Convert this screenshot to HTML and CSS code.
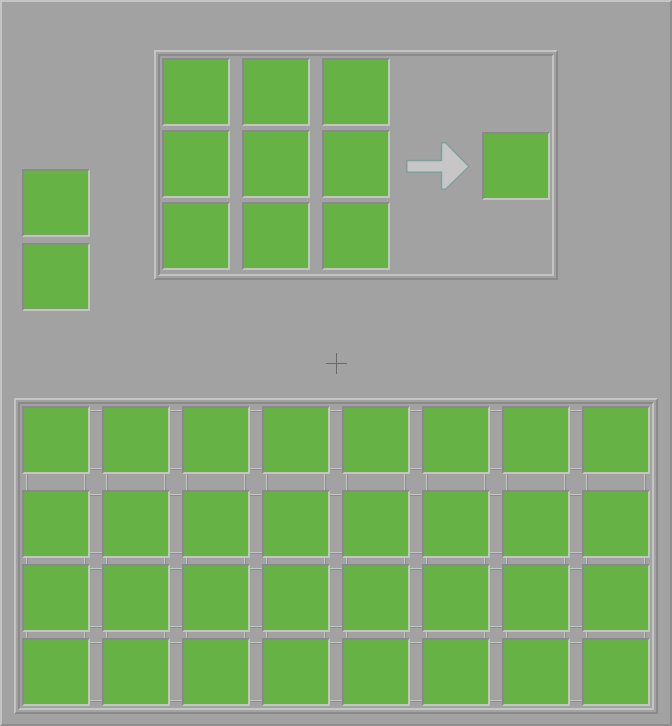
FILE: index.html
```html
<!DOCTYPE html>
<html lang="en">
<head>
    <meta charset="UTF-8">
    <meta name="viewport" content="width=device-width, initial-scale=1.0">
    <title>Inventory</title>
    <link rel="stylesheet" href="styles.css">
</head>
<body>
    <div class="window">
        <div class="top">
            <div class="side-slots">
                <div class="slot"></div>
                <div class="slot"></div>
            </div>

            <div class="panel crafting">
                <div class="panel-inner">
                    <div class="craft-content">
                        <div class="craft-grid">
                            <div class="slot"></div>
                            <div class="slot"></div>
                            <div class="slot"></div>
                            <div class="slot"></div>
                            <div class="slot"></div>
                            <div class="slot"></div>
                            <div class="slot"></div>
                            <div class="slot"></div>
                            <div class="slot"></div>
                        </div>
                        <svg class="arrow" width="64" height="48" viewBox="0 0 64 48">
                            <polygon points="0.8,18.5 35.5,18.5 35.5,0.8 39.5,0.8 63,24.5 39.5,47.2 35.5,47.2 35.5,30.2 0.8,30.2" fill="#c6c6c6" stroke="#7fa19d" stroke-width="1.5" stroke-linejoin="miter"/>
                        </svg>
                        <div class="slot result"></div>
                    </div>
                </div>
            </div>
        </div>

        <div class="cursor">
            <svg width="21" height="21" viewBox="0 0 21 21">
                <rect x="10" y="0" width="1" height="21" fill="#6a6a6a"/>
                <rect x="0" y="10" width="21" height="1" fill="#6a6a6a"/>
            </svg>
        </div>

        <div class="panel inventory">
            <div class="panel-inner">
                <div class="inv-grid">
                    <div class="inv-row first">
                        <div class="slot"></div><div class="slot"></div><div class="slot"></div><div class="slot"></div>
                        <div class="slot"></div><div class="slot"></div><div class="slot"></div><div class="slot"></div>
                    </div>
                    <div class="inv-row">
                        <div class="slot"></div><div class="slot"></div><div class="slot"></div><div class="slot"></div>
                        <div class="slot"></div><div class="slot"></div><div class="slot"></div><div class="slot"></div>
                    </div>
                    <div class="inv-row">
                        <div class="slot"></div><div class="slot"></div><div class="slot"></div><div class="slot"></div>
                        <div class="slot"></div><div class="slot"></div><div class="slot"></div><div class="slot"></div>
                    </div>
                    <div class="inv-row last">
                        <div class="slot"></div><div class="slot"></div><div class="slot"></div><div class="slot"></div>
                        <div class="slot"></div><div class="slot"></div><div class="slot"></div><div class="slot"></div>
                    </div>
                </div>
            </div>
        </div>
    </div>
</body>
</html>
```

FILE: styles.css
```css
body {
    margin: 0;
    padding: 0;
    background: #a2a2a2;
    font-family: "Liberation Sans", sans-serif;
}

.window {
    width: 672px;
    height: 726px;
    box-sizing: border-box;
    background: #a2a2a2;
    border: 2px solid;
    border-color: #c4c4c4 #8e8e8e #8e8e8e #c4c4c4;
    overflow: hidden;
}

.slot {
    width: 68px;
    height: 68px;
    box-sizing: border-box;
    background: #66b245;
    border: 2px solid;
    border-color: #8a8a8a #c4c4c4 #c4c4c4 #8a8a8a;
}

/* top part: side slots + crafting */
.top {
    display: flex;
    align-items: flex-start;
    padding: 48px 0 0 20px;
}

.side-slots {
    display: flex;
    flex-direction: column;
    gap: 6px;
    margin-top: 119px;
}

.panel {
    border: 2px solid;
    border-color: #c4c4c4 #8a8a8a #8a8a8a #c4c4c4;
    padding: 2px;
}

.panel-inner {
    border: 2px solid;
    border-color: #8a8a8a #c4c4c4 #c4c4c4 #8a8a8a;
}

.crafting {
    margin-left: 64px;
}

.craft-content {
    display: flex;
    align-items: flex-start;
    padding: 2px 2px 4px 2px;
}

.craft-grid {
    display: grid;
    grid-template-columns: repeat(3, 68px);
    column-gap: 12px;
    row-gap: 4px;
}

.arrow {
    display: block;
    margin: 84px 0 0 16px;
}

.result {
    margin: 74px 0 0 12px;
}

/* crosshair (top row ends at the side slots, y 311) */
.cursor {
    padding: 42px 0 24px 324px;
}

.cursor svg {
    display: block;
}

/* inventory */
.inventory {
    margin-left: 12px;
    width: 644px;
    box-sizing: border-box;
}

.inv-grid {
    padding: 2px;
    background-image: linear-gradient(to right,
        transparent 4px, #c4c4c4 4px, #c4c4c4 5px, #8e8e8e 5px, #8e8e8e 6px,
        transparent 6px, transparent 62px, #c4c4c4 62px, #c4c4c4 63px,
        #8e8e8e 63px, #8e8e8e 64px, transparent 64px);
    background-size: 80px 100%;
    background-origin: content-box;
    background-clip: content-box;
    background-repeat: repeat-x;
}

.inv-row {
    display: grid;
    grid-template-columns: repeat(8, 68px);
    column-gap: 12px;
    margin-bottom: 6px;
    background: #a2a2a2 linear-gradient(to bottom,
        transparent 4px, #c4c4c4 4px, #c4c4c4 5px, #8e8e8e 5px, #8e8e8e 6px,
        transparent 6px, transparent 62px, #c4c4c4 62px, #c4c4c4 63px,
        #8e8e8e 63px, #8e8e8e 64px, transparent 64px);
}

.inv-row.first {
    margin-bottom: 16px;
}

.inv-row.last {
    margin-bottom: 0;
}
```
